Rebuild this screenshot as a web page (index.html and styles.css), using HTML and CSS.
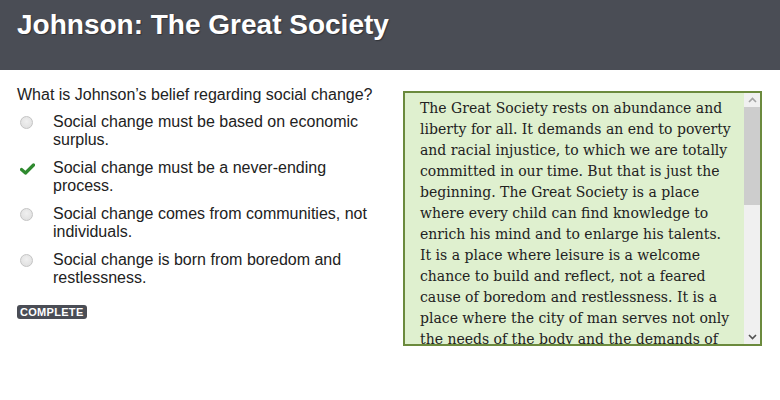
FILE: index.html
```html
<!DOCTYPE html>
<html>
<head>
<meta charset="utf-8">
<link rel="stylesheet" href="styles.css">
</head>
<body>
<header class="header"><h1 class="title">Johnson: The Great Society</h1></header>
<main class="content">
  <section class="question">
    <p class="prompt">What is Johnson’s belief regarding social change?</p>
    <ul class="options">
      <li class="option"><span class="radio"></span><span class="label">Social change must be based on economic surplus.</span></li>
      <li class="option"><span class="check"><svg width="15" height="12" viewBox="0 0 15 12"><path d="M1.5 6.5 L5.5 10 L13.5 2" fill="none" stroke="#2f8a2f" stroke-width="3.2" stroke-linecap="round" stroke-linejoin="round"/></svg></span><span class="label">Social change must be a never-ending process.</span></li>
      <li class="option"><span class="radio"></span><span class="label">Social change comes from communities, not individuals.</span></li>
      <li class="option"><span class="radio"></span><span class="label">Social change is born from boredom and restlessness.</span></li>
    </ul>
    <span class="badge">COMPLETE</span>
  </section>
  <section class="passage">
    <div class="passage-body">
      <p class="passage-text">The Great Society rests on abundance and liberty for all. It demands an end to poverty and racial injustice, to which we are totally committed in our time. But that is just the beginning. The Great Society is a place where every child can find knowledge to enrich his mind and to enlarge his talents. It is a place where leisure is a welcome chance to build and reflect, not a feared cause of boredom and restlessness. It is a place where the city of man serves not only the needs of the body and the demands of commerce but the desire for beauty and the hunger for community.</p>
    </div>
    <div class="scrollbar">
      <span class="arrow"><svg width="9" height="6" viewBox="0 0 9 6"><path d="M1 5 L4.5 1.5 L8 5" fill="none" stroke="#a3a3a3" stroke-width="1.6"/></svg></span>
      <span class="track"><span class="thumb"></span></span>
      <span class="arrow"><svg width="9" height="6" viewBox="0 0 9 6"><path d="M1 1 L4.5 4.5 L8 1" fill="none" stroke="#505050" stroke-width="1.6"/></svg></span>
    </div>
  </section>
</main>
</body>
</html>
```
FILE: styles.css
```css
html, body { margin: 0; padding: 0; background: #fff; }
body { font-family: "Liberation Sans", Arial, sans-serif; color: #222; width: 780px; height: 400px; overflow: hidden; }
.header { background: #4a4d55; height: 70px; box-sizing: border-box; padding: 9px 17px 0; }
.title { margin: 0; font-size: 28px; font-weight: bold; color: #fff; line-height: 32px; text-shadow: 1px 1px 1px rgba(0,0,0,0.35); }
.content { display: flex; padding: 16px 0 0 17px; }
.question { width: 356px; flex: none; margin-right: 30px; }
.prompt { margin: 0 0 9px; font-size: 16px; line-height: 18px; color: #222; }
.options { list-style: none; margin: 0; padding: 0; }
.option { display: flex; align-items: flex-start; margin-bottom: 10px; font-size: 16px; line-height: 18px; color: #222; }
.radio { width: 13px; height: 13px; border-radius: 50%; background: radial-gradient(circle at 50% 40%, #f0f0f0, #dcdcdc); border: 1px solid #c4c4c4; box-sizing: border-box; margin: 3px 20px 0 3px; flex: none; }
.check { width: 15px; height: 12px; margin: 4px 18px 0 3px; flex: none; display: flex; }
.label { flex: 1; }
.badge { display: inline-block; margin-top: 8px; background: #4a4d55; color: #fff; font-weight: bold; font-size: 11px; line-height: 14px; padding: 0 3px; border-radius: 3px; letter-spacing: 0.3px; }
.passage { flex: none; width: 359px; height: 255px; margin-top: 5px; box-sizing: border-box; border: 2px solid #6b8a3d; background: #dff0cf; display: flex; overflow: hidden; }
.passage-body { flex: 1; overflow: hidden; padding: 5px 9px 0 15px; }
.passage-text { margin: 0; font-family: "DejaVu Serif", Georgia, serif; font-size: 14px; line-height: 21px; color: #222; }
.scrollbar { width: 16px; flex: none; background: #f0f0f0; display: flex; flex-direction: column; }
.arrow { height: 14px; display: flex; align-items: center; justify-content: center; flex: none; }
.track { flex: 1; display: flex; flex-direction: column; }
.thumb { height: 98px; background: #cdcdcd; }
```
